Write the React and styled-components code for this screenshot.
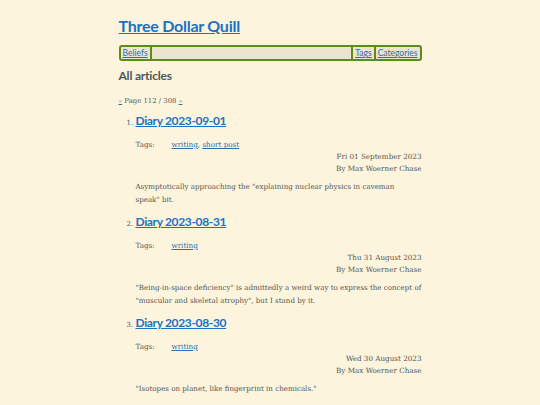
import React from "react";
import styled, { createGlobalStyle } from "styled-components";

const GlobalStyle = createGlobalStyle`
  html, body {
    margin: 0;
    padding: 0;
    background: #fcf4dc;
  }
  body {
    font-family: "DejaVu Serif", serif;
    color: #555;
  }
`;

const Page = styled.div`
  width: 303px;
  margin: 0 auto;
  padding-top: 14px;
`;

const SiteTitle = styled.h1`
  margin: 0;
  font-family: Lato, sans-serif;
  font-weight: 700;
  font-size: 16px;
  line-height: 24px;
  letter-spacing: -0.25px;
  a {
    color: #1b72c4;
  }
`;

const Nav = styled.nav`
  margin-top: 7px;
  display: flex;
  align-items: stretch;
  height: 12px;
  border: 2px solid #5e8c1c;
  border-radius: 3px;
  background: #ebe4cf;
  font-family: Lato, sans-serif;
  font-size: 8.5px;
  line-height: 12px;
`;

const NavLink = styled.a`
  color: #2b6fae;
  padding: 0 2px;
  border-left: ${p => (p.$left ? "2px solid #5e8c1c" : "none")};
  border-right: ${p => (p.$right ? "2px solid #5e8c1c" : "none")};
`;

const NavSpacer = styled.div`
  flex: 1;
`;

const Heading = styled.h2`
  margin: 6px 0 0;
  font-family: Lato, sans-serif;
  font-weight: 700;
  font-size: 12px;
  line-height: 18px;
  letter-spacing: -0.2px;
  color: #4a585b;
`;

const Pager = styled.div`
  margin-top: 10px;
  font-size: 6.9px;
  line-height: 12px;
  a {
    color: #2b6fae;
    font-size: 6px;
  }
`;

const List = styled.ol`
  margin: 5px 0 0;
  padding-left: 17px;
  font-size: 7px;
`;

const Item = styled.li`
  margin-bottom: 7px;
  &::marker {
    color: #555;
  }
`;

const ItemTitle = styled.h3`
  margin: 0;
  font-family: Lato, sans-serif;
  font-weight: 700;
  font-size: 12px;
  line-height: 18px;
  letter-spacing: -0.35px;
  a {
    color: #1b72c4;
  }
`;

const Meta = styled.div`
  margin-top: 9px;
  display: flex;
  font-size: 7.2px;
  line-height: 12px;
`;

const MetaLabel = styled.span`
  width: 36px;
`;

const TagLink = styled.a`
  color: #2b6fae;
`;

const Byline = styled.div`
  text-align: right;
  font-size: 7.2px;
  line-height: 12px;
`;

const Summary = styled.p`
  margin: 5px 0 0;
  font-size: 7.1px;
  line-height: 13px;
`;

const articles = [
  {
    title: "Diary 2023-09-01",
    tags: ["writing", "short post"],
    date: "Fri 01 September 2023",
    summary:
      "Asymptotically approaching the \"explaining nuclear physics in caveman speak\"\u00a0bit.",
  },
  {
    title: "Diary 2023-08-31",
    tags: ["writing"],
    date: "Thu 31 August 2023",
    summary:
      "\"Being-in-space deficiency\" is admittedly a weird way to express the concept of \"muscular and skeletal atrophy\", but I stand by it.",
  },
  {
    title: "Diary 2023-08-30",
    tags: ["writing"],
    date: "Wed 30 August 2023",
    summary: "\"Isotopes on planet, like fingerprint in chemicals.\"",
  },
];

export default function App() {
  return (
    <>
      <GlobalStyle />
      <Page>
        <SiteTitle>
          <a href="#">Three Dollar Quill</a>
        </SiteTitle>
        <Nav>
          <NavLink href="#" $right>
            Beliefs
          </NavLink>
          <NavSpacer />
          <NavLink href="#" $left $right>
            Tags
          </NavLink>
          <NavLink href="#">Categories</NavLink>
        </Nav>
        <Heading>All articles</Heading>
        <Pager>
          <a href="#">«</a> Page 112 / 308 <a href="#">»</a>
        </Pager>
        <List>
          {articles.map(a => (
            <Item key={a.title}>
              <ItemTitle>
                <a href="#">{a.title}</a>
              </ItemTitle>
              <Meta>
                <MetaLabel>Tags:</MetaLabel>
                <span>
                  {a.tags.map((t, i) => (
                    <React.Fragment key={t}>
                      {i > 0 && ", "}
                      <TagLink href="#">{t}</TagLink>
                    </React.Fragment>
                  ))}
                </span>
              </Meta>
              <Byline>{a.date}</Byline>
              <Byline>By Max Woerner Chase</Byline>
              <Summary>{a.summary}</Summary>
            </Item>
          ))}
        </List>
      </Page>
    </>
  );
}
